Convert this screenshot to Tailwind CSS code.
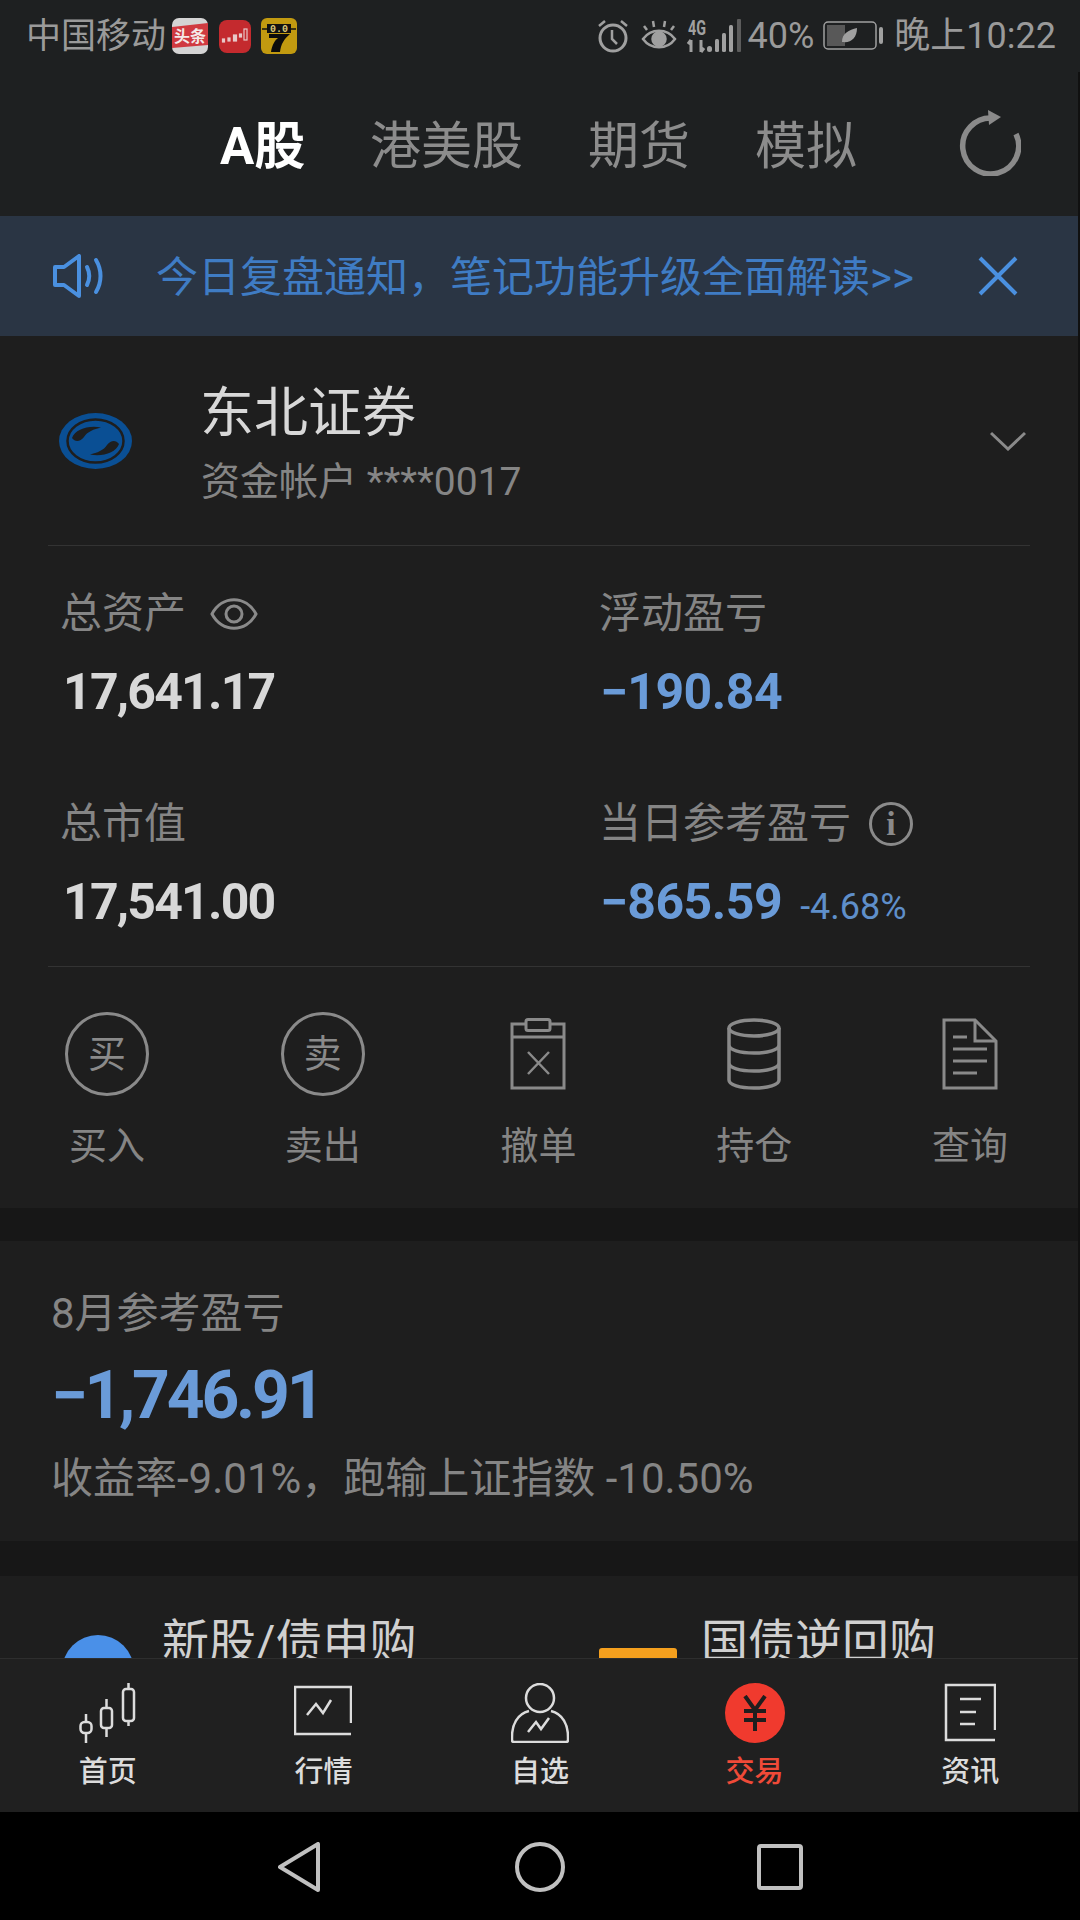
<!doctype html>
<html lang="zh-CN">
<head>
<meta charset="UTF-8" />
<meta name="viewport" content="width=device-width, initial-scale=1.0" />
<title>交易</title>
<script src="https://cdn.jsdelivr.net/npm/@tailwindcss/browser@4"></script>
</head>
<body class="bg-black font-['Roboto','Noto_Sans_CJK_SC',sans-serif]">
<div class="w-[1080px] h-[1920px] flex flex-col overflow-hidden">

  <!-- status bar -->
  <div class="h-[72px] bg-[#1e2021] flex items-center justify-between pl-[26px] pr-[24px] text-[#9a9a9a] shrink-0">
    <div class="flex items-center">
      <span class="text-[35px] leading-none">中国移动</span>
      <svg class="ml-[6px]" width="36" height="36" viewBox="0 0 36 36"><rect width="36" height="36" rx="7" fill="#d4d4d4"/><path d="M0 9L36 5V27L0 30z" fill="#d03a40"/><text x="18" y="24" text-anchor="middle" font-size="16" font-weight="700" fill="#f4e8e8">头条</text></svg>
      <svg class="ml-[11px]" width="32" height="33" viewBox="0 0 32 33"><rect width="32" height="33" rx="8" fill="#c42a2e"/><g stroke="#e8c8c8" stroke-width="1.200" fill="#e8c8c8"><rect x="3.500" y="19" width="2" height="3"/><rect x="9" y="18" width="2" height="3"/><rect x="14.500" y="15" width="3" height="6"/><rect x="20.500" y="14" width="2" height="3"/><rect x="25" y="9" width="3" height="11" fill="none"/></g></svg>
      <svg class="ml-[10px]" width="36" height="36" viewBox="0 0 36 36"><rect width="36" height="36" rx="6" fill="#c29a10"/><rect x="6" y="6" width="24" height="9" fill="#111"/><path d="M1 11h34" stroke="#111" stroke-width="1.500"/><text x="18" y="14" text-anchor="middle" font-size="10" font-weight="700" fill="#dcc878" font-family="Liberation Mono">0.0</text><path d="M8 16h21c-6 5-9 10-10 18h-9c1-7 4-12 7-14H8z" fill="#0c0c0c"/></svg>
    </div>
    <div class="flex items-center">
      <svg width="34" height="34" viewBox="0 0 34 34" fill="none" stroke="#a0a0a0"><circle cx="17" cy="19" r="13" stroke-width="3"/><path d="M16 11v9l5 5" stroke-width="2.500"/><path d="M3 7l6-5M31 7l-6-5" stroke-width="2.500"/></svg>
      <svg class="ml-[11px]" width="36" height="32" viewBox="0 0 36 32" fill="none" stroke="#a0a0a0" stroke-width="2.500"><path d="M2 19c8-11 24-11 32 0-8 11-24 11-32 0z"/><circle cx="18" cy="19" r="6.500" fill="#a0a0a0"/><path d="M6 10L3 6M13 7l-1-6M23 7l1-6M30 10l3-4"/></svg>
      <svg class="ml-[11px] overflow-visible" width="54" height="34" viewBox="0 0 54 34" fill="#a0a0a0">
        <text x="0" y="16" font-size="20" font-weight="700" font-family="Roboto" textLength="18" lengthAdjust="spacingAndGlyphs">4G</text>
        <path d="M3 33V21M0 25l3-4M13 21v12M13 33l3-4" stroke="#a0a0a0" stroke-width="3" fill="none"/>
        <rect x="19" y="27" width="5" height="6" rx="2.500"/><rect x="27" y="20" width="4" height="13" rx="1.500"/><rect x="34" y="14" width="4" height="19" rx="1.500"/><rect x="41" y="6" width="4" height="27" rx="1.500"/><rect x="49" y="0" width="4" height="33" rx="1" fill="#5c5c5c"/>
      </svg>
      <span class="ml-[6px] text-[36px] leading-none">40%</span>
      <svg class="ml-[9px]" width="60" height="30" viewBox="0 0 60 30" fill="none"><rect x="1" y="1" width="52" height="27" rx="4" stroke="#a0a0a0" stroke-width="1.500"/><rect x="4" y="4" width="18" height="21" fill="#585858"/><path d="M19 21c0-9 7-12 15-14 0 10-6 15-14 14z" fill="#a0a0a0"/><rect x="56" y="6" width="4" height="17" rx="2" fill="#a0a0a0"/></svg>
      <span class="ml-[11px] text-[36px] leading-none">晚上10:22</span>
    </div>
  </div>

  <div class="flex-1 min-h-0 flex flex-col bg-[#101010] pr-[2px]">
    <!-- top tabs -->
    <div class="h-[144px] bg-[#1e2021] flex items-center shrink-0 pl-[220px] text-[#8c8c8c] text-[51px] leading-none">
      <span class="w-[150px] mt-[4px] text-white font-bold">A股</span>
      <span class="w-[218px] mt-[4px]">港美股</span>
      <span class="w-[167px] mt-[4px]">期货</span>
      <span class="w-[202px] mt-[4px]">模拟</span>
      <svg class="mt-[-2px]" width="64" height="66" viewBox="0 0 64 66" fill="none"><path d="M35 8A28 28 0 1 0 59 24" stroke="#8a8a8a" stroke-width="5.500"/><path d="M31 0l13 7-12 8z" fill="#8a8a8a"/></svg>
    </div>

    <!-- notice -->
    <div class="h-[120px] bg-[#2a3544] flex items-center shrink-0 pl-[52px] text-[#3f7cc4]">
      <svg width="54" height="44" viewBox="0 0 54 44" fill="none" stroke="#4a90e0" stroke-width="4" stroke-linejoin="round"><path d="M3 13h9L27 2v40L12 31H3z"/><path d="M35 13c3 6 3 12 0 18M44 6c6 10 6 22 0 32" stroke-linecap="round"/></svg>
      <span class="ml-[50px] mt-[3px] text-[42px] leading-none whitespace-nowrap">今日复盘通知，笔记功能升级全面解读&gt;&gt;</span>
      <svg class="ml-[64px]" width="40" height="40" viewBox="0 0 40 40" stroke="#4a90e0" stroke-width="4"><path d="M2 2l36 36M38 2L2 38"/></svg>
    </div>

    <!-- account card -->
    <div class="h-[872px] bg-[#1e1e1e] shrink-0 flex flex-col">
      <div class="mx-[48px] h-[210px] border-b border-[#333333] flex items-center">
        <svg class="ml-[11px]" width="73" height="56" viewBox="0 0 73 56"><ellipse cx="36.500" cy="28" rx="36.500" ry="28" fill="#0a4f94"/><ellipse cx="36.500" cy="28" rx="28" ry="21.500" fill="none" stroke="#1e1e1e" stroke-width="2.500"/><path d="M13 25C16 16 30 12 42 14.500C35 16 28 19 25 24C21 29 16 29 13 25z" fill="#1e1e1e"/><path d="M13 25C16 16 30 12 42 14.500C35 16 28 19 25 24C21 29 16 29 13 25z" fill="#1e1e1e" transform="rotate(180 36.500 28)"/></svg>
        <div class="ml-[68px] flex-1">
          <div class="text-[54px] leading-none text-[#d8d8d8] mt-[8px]">东北证券</div>
          <div class="text-[39px] leading-none text-[#858585] mt-[22px] ml-[1px]">资金帐户 ****0017</div>
        </div>
        <svg class="mr-[4px]" width="36" height="20" viewBox="0 0 36 20" fill="none" stroke="#8a8a8a" stroke-width="3"><path d="M1 2l17 16L35 2"/></svg>
      </div>

      <div class="mx-[48px] h-[421px] border-b border-[#333333] grid grid-cols-[551px_1fr] grid-rows-[210px_1fr] pt-[47px]">
        <div class="pl-[12px]">
          <div class="flex items-center h-[42px]">
            <span class="text-[42px] leading-none text-[#858585]">总资产</span>
            <svg class="ml-[24px]" width="48" height="36" viewBox="0 0 48 36" fill="none" stroke="#8a8a8a" stroke-width="3"><path d="M2 18C12 -1 36 -1 46 18 36 37 12 37 2 18z"/><circle cx="24" cy="18" r="8"/></svg>
          </div>
          <div class="mt-[32px] ml-[3px] text-[50px] leading-none font-bold text-[#d8d8d8] tracking-[-1.800px]">17,641.17</div>
        </div>
        <div>
          <div class="text-[42px] leading-[42px] text-[#858585]">浮动盈亏</div>
          <div class="mt-[32px] ml-[1px] text-[50px] leading-none font-bold text-[#6a9bd8] tracking-[-0.5px]">−190.84</div>
        </div>
        <div class="pl-[12px]">
          <div class="text-[42px] leading-[42px] text-[#858585]">总市值</div>
          <div class="mt-[32px] ml-[3px] text-[50px] leading-none font-bold text-[#d8d8d8] tracking-[-1.800px]">17,541.00</div>
        </div>
        <div>
          <div class="flex items-center h-[42px]">
            <span class="text-[42px] leading-none text-[#858585]">当日参考盈亏</span>
            <span class="ml-[18px] w-[44px] h-[44px] rounded-full border-[3px] border-[#8a8a8a] flex items-center justify-center text-[#8a8a8a] text-[34px] leading-none font-bold font-['Liberation_Serif',serif]">i</span>
          </div>
          <div class="mt-[32px] ml-[1px] flex items-baseline">
            <span class="text-[50px] leading-none font-bold text-[#6a9bd8] tracking-[-0.5px]">−865.59</span>
            <span class="ml-[18px] text-[36px] leading-none text-[#5f8fca]">-4.68%</span>
          </div>
        </div>
      </div>

      <div class="grid grid-cols-5 pt-[45px] ml-[-1px]">
        <div class="flex flex-col items-center">
          <div class="w-[84px] h-[84px] rounded-full border-[3px] border-[#8a8a8a] flex items-center justify-center text-[38px] leading-none text-[#8a8a8a]">买</div>
          <span class="mt-[31px] text-[38px] leading-none text-[#858585]">买入</span>
        </div>
        <div class="flex flex-col items-center">
          <div class="w-[84px] h-[84px] rounded-full border-[3px] border-[#8a8a8a] flex items-center justify-center text-[38px] leading-none text-[#8a8a8a]">卖</div>
          <span class="mt-[31px] text-[38px] leading-none text-[#858585]">卖出</span>
        </div>
        <div class="flex flex-col items-center">
          <svg class="my-[6px]" width="56" height="72" viewBox="0 0 56 72" fill="none" stroke="#8a8a8a" stroke-width="3"><path d="M2 6h52v64H2zM2 19h52"/><rect x="16" y="1.500" width="24" height="11" rx="2" fill="#1e1e1e"/><path d="M18 34l21 22M39 34L18 56" stroke-width="2.500"/></svg>
          <span class="mt-[31px] text-[38px] leading-none text-[#858585]">撤单</span>
        </div>
        <div class="flex flex-col items-center">
          <svg class="my-[6px]" width="56" height="72" viewBox="0 0 56 72" fill="none" stroke="#8a8a8a" stroke-width="3.500"><ellipse cx="28" cy="10" rx="25" ry="8"/><path d="M3 10v52c0 5 11 8 25 8s25-3 25-8V10M3 27c0 5 11 8 25 8s25-3 25-8M3 45c0 5 11 8 25 8s25-3 25-8"/></svg>
          <span class="mt-[31px] text-[38px] leading-none text-[#858585]">持仓</span>
        </div>
        <div class="flex flex-col items-center">
          <svg class="my-[6px]" width="56" height="72" viewBox="0 0 56 72" fill="none" stroke="#8a8a8a" stroke-width="3"><path d="M2 2h31l21 21v47H2z"/><path d="M33 2v21h21"/><path d="M11 19h14M11 31h34M11 43h34M11 55h24"/></svg>
          <span class="mt-[31px] text-[38px] leading-none text-[#858585]">查询</span>
        </div>
      </div>
    </div>

    <div class="h-[33px] bg-[#171717] shrink-0"></div>

    <!-- month summary -->
    <div class="h-[300px] bg-[#1e1e1e] shrink-0 pl-[51px] pt-[52px]">
      <div class="text-[42px] leading-none text-[#858585]">8月参考盈亏</div>
      <div class="mt-[28px] text-[66px] leading-none font-bold text-[#6a9bd8] tracking-[-3.200px]">−1,746.91</div>
      <div class="mt-[29px] text-[42px] leading-none text-[#858585] whitespace-nowrap">收益率-9.01%，跑输上证指数 -10.50%</div>
    </div>

    <div class="h-[35px] bg-[#171717] shrink-0"></div>

    <!-- cut off by the tab bar -->
    <div class="flex-1 min-h-0 bg-[#1e1e1e] overflow-hidden flex">
      <div class="w-[599px] flex pl-[62px]">
        <div class="mt-[59px] w-[72px] h-[72px] rounded-full bg-[#4a90e8]"></div>
        <span class="ml-[28px] mt-[42px] text-[47px] leading-none text-[#d0d0d0]">新股/债申购</span>
      </div>
      <div class="flex">
        <div class="mt-[72px] w-[78px] h-[60px] rounded-[3px] bg-[#f5a01e]"></div>
        <span class="ml-[24px] mt-[42px] text-[47px] leading-none text-[#d0d0d0]">国债逆回购</span>
      </div>
    </div>

    <!-- tab bar -->
    <div class="h-[154px] bg-[#202020] border-t border-[#2e2e2e] shrink-0 grid grid-cols-5 pt-[24px] text-[29px] leading-none text-[#dcdcdc] font-medium">
      <div class="flex flex-col items-center">
        <svg width="58" height="60" viewBox="0 0 58 60" fill="none" stroke="#dcdcdc" stroke-width="2.500"><rect x="1.500" y="39" width="11" height="11" rx="4"/><path d="M7 31v8M7 50v10"/><rect x="22" y="25" width="11" height="20" rx="3"/><path d="M27.500 16v9M27.500 45v9"/><rect x="44" y="6" width="11" height="32" rx="3"/><path d="M49.500 0v6M49.500 38v5"/></svg>
        <span class="mt-[15px]">首页</span>
      </div>
      <div class="flex flex-col items-center">
        <svg width="58" height="60" viewBox="0 0 58 60" fill="none" stroke="#dcdcdc" stroke-width="2.500"><path d="M57 40V4H1v47h56"/><path d="M13 32l9-11 7 9 8-13"/></svg>
        <span class="mt-[15px]">行情</span>
      </div>
      <div class="flex flex-col items-center ml-[2px]">
        <svg width="58" height="60" viewBox="0 0 58 60" fill="none" stroke="#dcdcdc" stroke-width="2.500"><ellipse cx="29" cy="15" rx="14" ry="14"/><path d="M18 28C6 31 1 42 1 54v3a2 2 0 0 0 2 2h52a2 2 0 0 0 2-2v-3c0-12-5-23-17-26"/><path d="M17 49l8-10 5 7 8-11"/></svg>
        <span class="mt-[15px]">自选</span>
      </div>
      <div class="flex flex-col items-center">
        <div class="w-[60px] h-[60px] rounded-full bg-[#f03a2e] flex items-center justify-center">
          <svg width="28" height="36" viewBox="0 0 28 36" fill="none" stroke="#1e1e1e" stroke-width="4"><path d="M4 1l10 14L24 1M14 15v21M3 16h22M3 25h22"/></svg>
        </div>
        <span class="mt-[15px] text-[#f04a38]">交易</span>
      </div>
      <div class="flex flex-col items-center">
        <svg width="52" height="60" viewBox="0 0 52 60" fill="none" stroke="#dcdcdc" stroke-width="2.500"><path d="M51 47V2H2v55h49"/><path d="M16 16h21M16 29h16M16 41h15"/></svg>
        <span class="mt-[15px]">资讯</span>
      </div>
    </div>
  </div>

  <!-- system nav -->
  <div class="h-[108px] bg-black shrink-0 flex items-center pl-[278px] pt-[2px]">
    <svg width="42" height="50" viewBox="0 0 42 50" fill="none" stroke="#c0c0c0" stroke-width="4" stroke-linejoin="round"><path d="M40 2v46L2 25z"/></svg>
    <svg class="ml-[195px]" width="50" height="50" viewBox="0 0 50 50" fill="none" stroke="#c0c0c0" stroke-width="4"><circle cx="25" cy="25" r="23"/></svg>
    <svg class="ml-[192px]" width="46" height="46" viewBox="0 0 46 46" fill="none" stroke="#c0c0c0" stroke-width="4"><rect x="2" y="2" width="42" height="42" rx="2"/></svg>
  </div>
</div>
</body>
</html>
